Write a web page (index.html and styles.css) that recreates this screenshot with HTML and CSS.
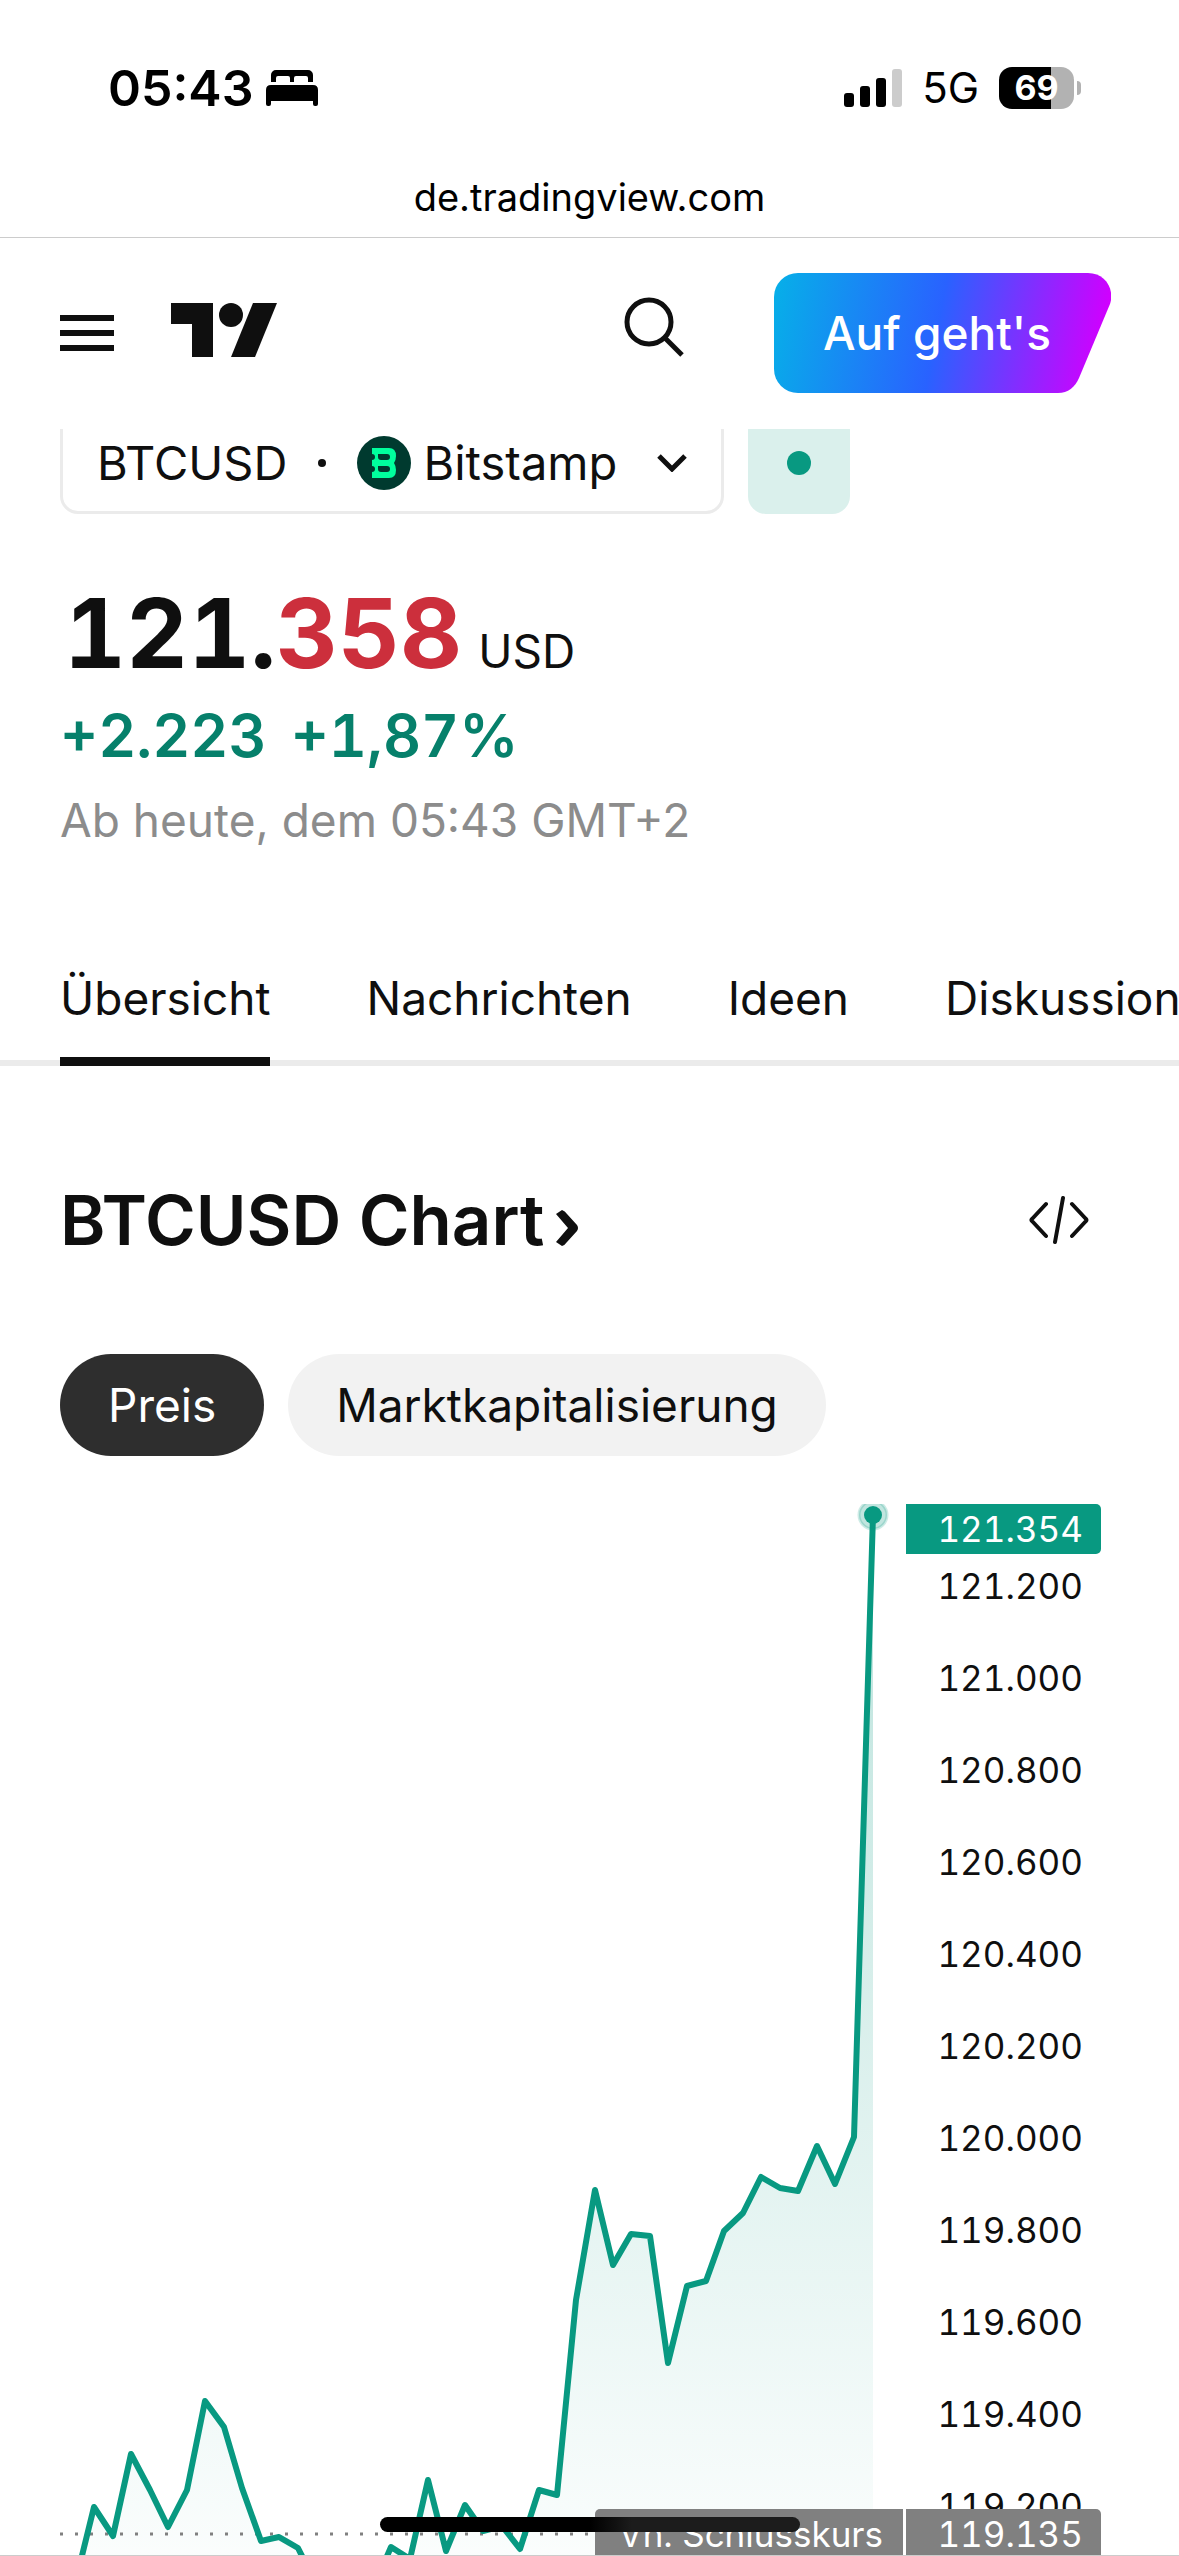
FILE: index.html
```html
<!DOCTYPE html>
<html lang="de">
<head>
<meta charset="UTF-8">
<meta name="viewport" content="width=device-width, initial-scale=1.0">
<title>BTCUSD Chart</title>
<link rel="stylesheet" href="styles.css">
</head>
<body>
  <div class="status-bar">
    <div class="status-left">
      <span class="time">05:43</span>
      <svg class="bed" width="52" height="36" viewBox="0 0 52 36">
        <path d="M5 12V5a5 5 0 0 1 5-5h32a5 5 0 0 1 5 5v7h-5V8q0-2-2-2H30q-2 0-2 2v4h-4V8q0-2-2-2H12q-2 0-2 2v4z"/>
        <path d="M0 20q0-5 5-5h42q5 0 5 5v14q0 2-2 2h-1q-2 0-2-2v-3H5v3q0 2-2 2H2q-2 0-2-2z"/>
      </svg>
    </div>
    <div class="status-right">
      <svg width="58" height="38" viewBox="0 0 58 38">
        <rect x="0" y="24" width="10" height="14" rx="3"/>
        <rect x="16" y="17" width="10" height="21" rx="3"/>
        <rect x="32" y="9" width="10" height="29" rx="3"/>
        <rect x="48" y="0" width="10" height="38" rx="3" fill="#cccccc"/>
      </svg>
      <span class="network">5G</span>
      <div class="battery"><span>69</span></div>
    </div>
  </div>
  <div class="url-bar">de.tradingview.com</div>

  <header class="header">
    <button class="icon-button" aria-label="Menü">
      <svg width="54" height="36" viewBox="0 0 54 36" fill="#0f0f0f"><path d="M0 0h54v6H0zM0 15h54v6H0zM0 30h54v6H0z"/></svg>
    </button>
    <a class="logo" href="#" aria-label="TradingView">
      <svg width="106" height="54" viewBox="0 0 106 54" fill="#0f0f0f">
        <path d="M0 0h42v54H21V21H0z"/>
        <circle cx="60" cy="12" r="12"/>
        <path d="M82 0h24L84 54H60z"/>
      </svg>
    </a>
    <button class="icon-button search" aria-label="Suche">
      <svg width="60" height="60" viewBox="0 0 60 60" fill="none" stroke="#0f0f0f" stroke-width="5">
        <circle cx="25" cy="25" r="22"/>
        <path d="M41 41l17 17"/>
      </svg>
    </button>
    <button class="start-button">
      <svg width="337" height="120" viewBox="0 0 337 120">
        <defs>
          <linearGradient id="startFill" gradientUnits="userSpaceOnUse" x1="0" y1="0" x2="329" y2="63">
            <stop offset="0" stop-color="#06b0e8"/>
            <stop offset="0.51" stop-color="#2962ff"/>
            <stop offset="1" stop-color="#d000ff"/>
          </linearGradient>
        </defs>
        <path fill="url(#startFill)" d="M24 0H314C331 0 341 16 336 31L305 105C301 114 294 120 284 120H24A24 24 0 0 1 0 96V24A24 24 0 0 1 24 0Z"/>
      </svg>
      <span>Auf geht's</span>
    </button>
  </header>

  <main>
    <div class="symbol-row">
      <button class="symbol-select">
        <span>BTCUSD</span>
        <span class="separator"></span>
        <span class="exchange">
          <svg width="54" height="54" viewBox="0 0 54 54">
            <circle cx="27" cy="27" r="27" fill="#003a2f"/>
            <path fill="#00ff9d" fill-rule="evenodd" d="M15 12h17q7 0 7 8 0 4-2 7 2 3 2 7 0 8-7 8H15v-6q3 0 3-3t-3-3v-6q3 0 3-3t-3-3zM21 18v3q0 3 3 3h6q3 0 3-3t-3-3zM21 30v3q0 3 3 3h6q3 0 3-3t-3-3z"/>
          </svg>
          Bitstamp
        </span>
        <svg class="chevron" width="30" height="18" viewBox="0 0 30 18" fill="none" stroke="#0f0f0f" stroke-width="5"><path d="M2 2l13 13L28 2"/></svg>
      </button>
      <div class="market-status"><span></span></div>
    </div>

    <div class="quote">
      <div class="price"><strong>121.<em>358</em></strong><span>USD</span></div>
      <div class="change"><span>+2.223</span><span>+1,87%</span></div>
      <div class="updated">Ab heute, dem 05:43 GMT+2</div>
    </div>

    <nav class="tabs">
      <a class="active" href="#">Übersicht</a>
      <a href="#">Nachrichten</a>
      <a href="#">Ideen</a>
      <a href="#">Diskussionen</a>
    </nav>

    <section class="chart-section">
      <div class="chart-title">
        <h2><a href="#">BTCUSD Chart
          <svg width="22" height="36" viewBox="0 0 22 36" fill="#0f0f0f"><path d="M0 4L6 0q3 1 5 4l10 11q2 3 0 6L11 32q-2 3-5 4l-6-4 12-14z"/></svg></a></h2>
        <button class="icon-button" aria-label="Einbetten">
          <svg width="60" height="48" viewBox="0 0 60 48" fill="none" stroke="#0f0f0f" stroke-width="4" stroke-linecap="round" stroke-linejoin="round">
            <path d="M17 8L3 23q-1 1 0 2l14 15M43 8l14 15q1 1 0 2L43 40M34 2l-8 44"/>
          </svg>
        </button>
      </div>

      <div class="chips">
        <button class="chip selected">Preis</button>
        <button class="chip">Marktkapitalisierung</button>
      </div>

      <div class="chart">
        <div class="plot">
          <svg viewBox="0 0 846 1052">
            <defs>
              <linearGradient id="area" gradientUnits="userSpaceOnUse" x1="0" y1="0" x2="0" y2="1130">
                <stop offset="0" stop-color="#089981" stop-opacity="0.28"/>
                <stop offset="1" stop-color="#089981" stop-opacity="0"/>
              </linearGradient>
            </defs>
            <path fill="url(#area)" d="M15 1080L34 1003 53 1032 71 950 90 986 108 1023 127 986 145 897 164 923 182 984 201 1037 219 1033 238 1044 256 1080H315L331 1043 350 1055 368 976 386 1047 405 1001 423 1027 442 1022 460 1045 479 986 497 991 516 796 535 686 553 761 571 730 590 732 608 859 627 782 646 777 664 727 683 709 701 673 720 684 738 687 757 642 775 680 794 633 813 11V1080Z"/>
            <path fill="none" stroke="#808080" stroke-width="3" stroke-dasharray="3 12" d="M0 1030H537"/>
            <path fill="none" stroke="#089981" stroke-width="6" stroke-linejoin="round" d="M15 1080L34 1003 53 1032 71 950 90 986 108 1023 127 986 145 897 164 923 182 984 201 1037 219 1033 238 1044 256 1080M315 1080L331 1043 350 1055 368 976 386 1047 405 1001 423 1027 442 1022 460 1045 479 986 497 991 516 796 535 686 553 761 571 730 590 732 608 859 627 782 646 777 664 727 683 709 701 673 720 684 738 687 757 642 775 680 794 633 813 11"/>
            <circle cx="813" cy="11" r="14" fill="#089981" fill-opacity="0.25" stroke="#089981" stroke-opacity="0.2" stroke-width="3"/>
            <circle cx="813" cy="11" r="9" fill="#089981"/>
          </svg>
          <div class="close-label">Vn. Schlusskurs</div>
        </div>
        <div class="price-scale">
          <ul>
            <li>121.200</li>
            <li>121.000</li>
            <li>120.800</li>
            <li>120.600</li>
            <li>120.400</li>
            <li>120.200</li>
            <li>120.000</li>
            <li>119.800</li>
            <li>119.600</li>
            <li>119.400</li>
            <li>119.200</li>
          </ul>
          <div class="last-price">121.354</div>
          <div class="close-price">119.135</div>
        </div>
      </div>
    </section>
  </main>
  <div class="home-indicator"></div>
</body>
</html>
```

FILE: styles.css
```css
* {
  box-sizing: border-box;
}

body {
  margin: 0;
  height: 100vh;
  display: flex;
  flex-direction: column;
  overflow: hidden;
  position: relative;
  background: #ffffff;
  color: #0f0f0f;
  font-family: Inter, "Liberation Sans", sans-serif;
  font-size: 46px;
  line-height: 60px;
}

svg {
  display: block;
  flex: none;
}

a {
  color: inherit;
  text-decoration: none;
}

button {
  margin: 0;
  padding: 0;
  border: none;
  background: none;
  color: inherit;
  font: inherit;
  cursor: pointer;
}

/* phone status bar */
.status-bar {
  flex: none;
  display: flex;
  justify-content: space-between;
  align-items: center;
  height: 160px;
  padding: 16px 105px 0 108px;
  color: #000000;
}

.status-left,
.status-right {
  display: flex;
  align-items: center;
}

.status-left {
  gap: 13px;
}

.status-right {
  gap: 20px;
}

.time {
  font-size: 50px;
  font-weight: 600;
}

.network {
  font-size: 42px;
}

.battery {
  position: relative;
  width: 75px;
  height: 42px;
  border-radius: 13px;
  background: linear-gradient(to right, #000000 52px, #b2b2b2 52px);
  color: #ffffff;
  font-size: 34px;
  font-weight: 700;
  line-height: 42px;
  text-align: center;
}

/* battery tip */
.battery::after {
  content: "";
  position: absolute;
  right: -7px;
  top: 14px;
  width: 4px;
  height: 14px;
  border-radius: 0 4px 4px 0;
  background: #b2b2b2;
}

.url-bar {
  flex: none;
  height: 78px;
  padding-top: 7px;
  border-bottom: 1px solid #cccccc;
  color: #000000;
  font-size: 38px;
  text-align: center;
}

/* site header */
.header {
  flex: none;
  display: flex;
  align-items: center;
  height: 191px;
  padding: 0 68px 2px 60px;
  background: #ffffff;
  position: relative;
  z-index: 1;
}

.logo {
  margin: 0 auto 6px 57px;
}

.search {
  margin: 0 90px 12px 0;
}

.start-button {
  position: relative;
  width: 337px;
  height: 120px;
  padding-left: 49px;
  color: #ffffff;
  font-weight: 500;
  text-align: left;
}

.start-button svg {
  position: absolute;
  left: 0;
  top: 0;
}

.start-button span {
  position: relative;
}

main {
  flex: 1;
  min-height: 0;
  display: flex;
  flex-direction: column;
}

/* the row is half scrolled under the header */
.symbol-row {
  display: flex;
  gap: 24px;
  margin: -17px 60px 0;
}

.symbol-select {
  display: flex;
  align-items: center;
  height: 102px;
  padding: 0 34px;
  border: 3px solid #ebebeb;
  border-radius: 18px;
  font-size: 47px;
}

.separator {
  width: 8px;
  height: 8px;
  margin: 0 31px;
  border-radius: 50%;
  background: #0f0f0f;
}

.exchange {
  display: flex;
  align-items: center;
  gap: 12px;
}

.chevron {
  margin-left: 40px;
}

.market-status {
  display: flex;
  align-items: center;
  justify-content: center;
  width: 102px;
  height: 102px;
  border-radius: 18px;
  background: #daf0ec;
}

.market-status span {
  width: 24px;
  height: 24px;
  border-radius: 50%;
  background: #089981;
}

.quote {
  padding: 76px 60px 0;
  font-feature-settings: "tnum";
}

.price {
  display: flex;
  align-items: baseline;
  gap: 16px;
  padding-left: 4px;
  line-height: 86px;
}

.price strong {
  font-size: 96px;
  font-weight: 700;
}

.price em {
  color: #cc2f3c;
  font-style: normal;
}

.change {
  display: flex;
  gap: 24px;
  color: #06806b;
  font-size: 59px;
  font-weight: 600;
  line-height: 84px;
}

.updated {
  line-height: 84px;
  color: #8c8c8c;
  font-feature-settings: normal;
}

.tabs {
  flex: none;
  display: flex;
  gap: 96px;
  height: 138px;
  margin-top: 66px;
  padding: 0 60px;
  overflow: hidden;
  box-shadow: inset 0 -6px #ebebeb;
}

.tabs a {
  flex: none;
  padding-top: 40px;
}

.tabs .active {
  border-bottom: 9px solid #0f0f0f;
}

.chart-section {
  flex: 1;
  min-height: 0;
  display: flex;
  flex-direction: column;
}

.chart-title {
  display: flex;
  justify-content: space-between;
  align-items: center;
  padding: 106px 90px 0 60px;
}

h2 {
  margin: 0;
  font-size: 69px;
  font-weight: 600;
  line-height: 96px;
}

h2 a {
  display: flex;
  align-items: center;
  gap: 12px;
}

h2 svg {
  margin-top: 16px;
}

.chips {
  display: flex;
  gap: 24px;
  padding: 86px 60px 0;
}

.chip {
  height: 102px;
  padding: 0 48px;
  border-radius: 51px;
  background: #f2f2f2;
}

.chip.selected {
  background: #2e2e2e;
  color: #ffffff;
}

.chart {
  flex: 1;
  min-height: 0;
  display: flex;
  margin-top: 48px;
  padding: 0 78px 0 60px;
  overflow: hidden;
  border-bottom: 1px solid #cccccc;
  font-size: 35px;
  line-height: 50px;
  font-feature-settings: "tnum";
}

.plot {
  flex: 1;
  position: relative;
}

.plot svg {
  width: 100%;
}

.price-scale {
  position: relative;
  width: 195px;
  text-align: right;
}

.price-scale ul {
  margin: 0;
  padding: 36px 18px 0 0;
  list-style: none;
}

.price-scale li {
  line-height: 92px;
}

.last-price,
.close-price {
  position: absolute;
  left: 0;
  right: 0;
  padding-right: 18px;
  border-radius: 0 5px 5px 0;
  color: #ffffff;
}

.last-price {
  top: 0;
  background: #089981;
}

.close-price,
.close-label {
  top: 1005px;
  background: #808080;
}

.close-label {
  position: absolute;
  right: 3px;
  padding: 0 20px 0 24px;
  border-radius: 5px 0 0 5px;
  color: #ffffff;
}

.home-indicator {
  position: absolute;
  left: 50%;
  bottom: 24px;
  width: 420px;
  height: 15px;
  margin-left: -210px;
  border-radius: 8px;
  background: linear-gradient(to right, #000000 50%, #1c1c1c 60%);
}
```
